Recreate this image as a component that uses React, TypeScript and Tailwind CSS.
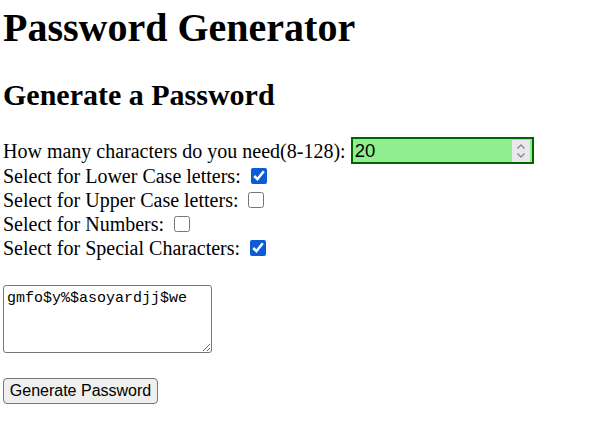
import { useState } from "react";

const serif = { fontFamily: '"Liberation Serif", "Times New Roman", serif' };

export default function App() {
  const [lower, setLower] = useState(true);
  const [upper, setUpper] = useState(false);
  const [numbers, setNumbers] = useState(false);
  const [special, setSpecial] = useState(true);

  return (
    <div className="min-h-[430px] bg-white px-[3px] text-black" style={serif}>
      <h1 className="mt-[6px] text-[40px] font-bold leading-[44px]">Password Generator</h1>
      <h2 className="mt-[28px] text-[30px] font-bold leading-[33px]">Generate a Password</h2>

      <div className="mt-[26px] flex h-[27px] items-center text-[20px] leading-[22px]">
        <span>How many characters do you need(8-128):</span>
        <div className="ml-[5px] flex h-[27px] w-[183px] items-center border-2 border-[#006400] bg-[#90ee90]">
          <input
            type="text"
            defaultValue="20"
            className="h-full min-w-0 flex-1 bg-transparent pl-[2px] text-[18.5px] outline-none"
            style={{ fontFamily: '"Liberation Sans", Arial, sans-serif' }}
          />
          <div className="mr-[2px] flex h-[22px] w-[18px] flex-col items-center justify-center bg-[#e9e9ed]">
            <svg width="10" height="16" viewBox="0 0 10 16" fill="none" stroke="#8a8a8a" strokeWidth="1.3">
              <path d="M1.5 5.5 5 2l3.5 3.5" />
              <path d="M1.5 10.5 5 14l3.5-3.5" />
            </svg>
          </div>
        </div>
      </div>

      <CheckRow label="Select for Lower Case letters:" checked={lower} onChange={setLower} />
      <CheckRow label="Select for Upper Case letters:" checked={upper} onChange={setUpper} />
      <CheckRow label="Select for Numbers:" checked={numbers} onChange={setNumbers} />
      <CheckRow label="Select for Special Characters:" checked={special} onChange={setSpecial} />

      <textarea
        readOnly
        value="gmfo$y%$asoyardjj$we"
        className="mt-[25px] block h-[68px] w-[209px] rounded-[3px] border border-[#767676] px-[3px] py-[4px] text-[15px] leading-[18px] outline-none"
        style={{ fontFamily: '"Liberation Mono", "DejaVu Sans Mono", monospace' }}
      />

      <button
        className="mt-[25px] block h-[26px] w-[155px] rounded-[4px] border border-[#767676] bg-[#efefef] text-[16px] leading-[20px]"
        style={{ fontFamily: '"Liberation Sans", Arial, sans-serif' }}
      >
        Generate Password
      </button>
    </div>
  );
}

function CheckRow({
  label,
  checked,
  onChange,
}: {
  label: string;
  checked: boolean;
  onChange: (v: boolean) => void;
}) {
  return (
    <div className="flex h-[24px] items-center text-[20px] leading-[22px]">
      <span>{label}</span>
      <input
        type="checkbox"
        checked={checked}
        onChange={(e) => onChange(e.target.checked)}
        className="ml-[10px] h-4 w-4 accent-[#0b5cd5]"
      />
    </div>
  );
}
